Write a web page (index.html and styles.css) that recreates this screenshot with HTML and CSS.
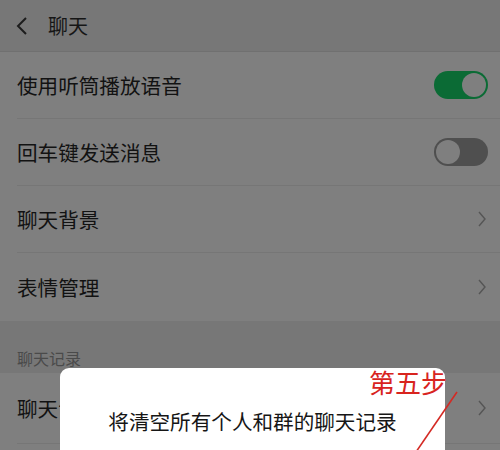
FILE: index.html
```html
<!DOCTYPE html>
<html lang="zh">
<head>
  <meta charset="UTF-8">
  <title>聊天</title>
  <link rel="stylesheet" href="styles.css">
</head>
<body>
  <div class="screen">
    <div class="topbar">
      <svg class="back" width="12" height="18" viewBox="0 0 12 18">
        <polyline points="10,1 2,9 10,17" fill="none" stroke="#1c1c1c" stroke-width="2"/>
      </svg>
      <span class="title">聊天</span>
    </div>

    <div class="group">
      <div class="row">
        <span>使用听筒播放语音</span>
        <span class="switch on"><span class="knob"></span></span>
      </div>
      <div class="row">
        <span>回车键发送消息</span>
        <span class="switch"><span class="knob"></span></span>
      </div>
      <div class="row">
        <span>聊天背景</span>
        <svg class="chevron" width="8" height="16" viewBox="0 0 8 16">
          <polyline points="1,1 7,8 1,15" fill="none" stroke="#555" stroke-width="1.4"/>
        </svg>
      </div>
      <div class="row last">
        <span>表情管理</span>
        <svg class="chevron" width="8" height="16" viewBox="0 0 8 16">
          <polyline points="1,1 7,8 1,15" fill="none" stroke="#555" stroke-width="1.4"/>
        </svg>
      </div>
    </div>

    <div class="section-title">聊天记录</div>

    <div class="group">
      <div class="row tall">
        <span>聊天记录迁移</span>
        <svg class="chevron" width="8" height="16" viewBox="0 0 8 16">
          <polyline points="1,1 7,8 1,15" fill="none" stroke="#555" stroke-width="1.4"/>
        </svg>
      </div>
    </div>

    <!-- dialog over the list -->
    <div class="dialog">
      <p>将清空所有个人和群的聊天记录</p>
    </div>

    <div class="note">第五步</div>
    <svg class="note-line" width="500" height="450" viewBox="0 0 500 450">
      <line x1="457" y1="392" x2="416" y2="452" stroke="#d42a24" stroke-width="1.6"/>
    </svg>
  </div>
</body>
</html>
```

FILE: styles.css
```css
body {
  margin: 0;
  font-family: "Noto Sans CJK SC", "Noto Sans", sans-serif;
  background: #7f7f7f;
}

.screen {
  position: relative;
  width: 500px;
  height: 450px;
  overflow: hidden;
  background: #7f7f7f;
}

.topbar {
  display: flex;
  align-items: center;
  height: 51px;
  padding-left: 16px;
  background: #777777;
  border-bottom: 1px solid #707070;
}

.back {
  margin-right: 20px;
  margin-top: 1px;
}

.title {
  font-size: 20px;
  color: #161616;
}

.group {
  background: #7f7f7f;
}

.row {
  box-sizing: border-box;
  display: flex;
  align-items: center;
  justify-content: space-between;
  height: 67px;
  margin-left: 17px;
  padding-right: 13px;
  border-bottom: 1px solid #767676;
  font-size: 20.6px;
  color: #121212;
}

.row.last {
  border-bottom: none;
  height: 68px;
}

.row.tall {
  height: 71px;
}

.switch {
  position: relative;
  box-sizing: border-box;
  width: 54px;
  height: 28px;
  margin-right: -1px;
  border-radius: 14px;
  background: #4f4f4f;
}

.switch .knob {
  position: absolute;
  top: 2px;
  left: 2px;
  width: 24px;
  height: 24px;
  border-radius: 50%;
  background: #7f7f7f;
}

.switch.on {
  background: #0b6b35;
}

.switch.on .knob {
  left: 28px;
}

.chevron {
  margin-right: 1px;
}

.section-title {
  box-sizing: border-box;
  height: 52px;
  padding: 26px 0 0 17px;
  background: #777777;
  font-size: 16px;
  line-height: 22px;
  color: #4a4a4a;
}

.dialog {
  position: absolute;
  left: 60px;
  top: 368px;
  width: 385px;
  height: 140px;
  border-radius: 9px;
  background: #ffffff;
}

.dialog p {
  margin: 41px 0 0;
  text-align: center;
  font-size: 20.6px;
  line-height: 24px;
  color: #161616;
}

.note {
  position: absolute;
  left: 369px;
  top: 367px;
  font-size: 26px;
  line-height: 30px;
  color: #d8241e;
}

.note-line {
  position: absolute;
  left: 0;
  top: 0;
}
```
